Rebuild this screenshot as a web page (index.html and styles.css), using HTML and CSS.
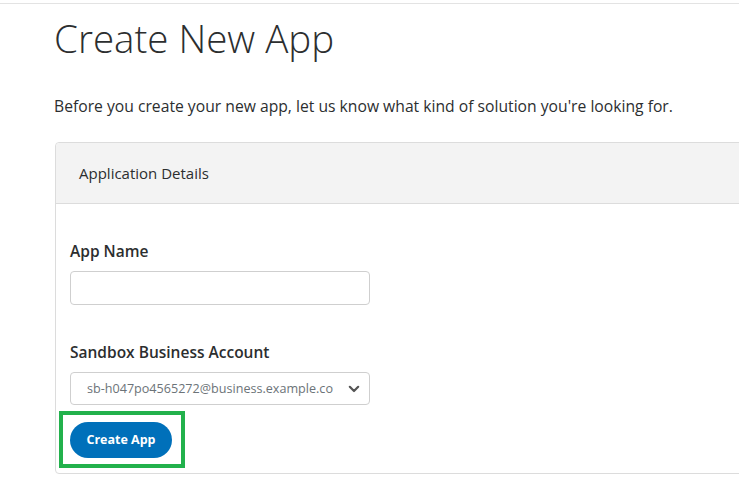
FILE: index.html
```html
<!DOCTYPE html>
<html lang="en">
<head>
<meta charset="utf-8">
<title>Create New App</title>
<link rel="stylesheet" href="styles.css">
</head>
<body>
<div class="topbar"></div>
<main class="page">
  <h1 class="title">Create New App</h1>
  <p class="intro">Before you create your new app, let us know what kind of solution you're looking for.</p>
  <section class="card">
    <div class="card-head">Application Details</div>
    <div class="card-body">
      <div class="field">
        <label class="label" for="appname">App Name</label>
        <input class="input" id="appname" type="text">
      </div>
      <div class="field field-select">
        <label class="label" for="acct">Sandbox Business Account</label>
        <div class="select">
          <span class="select-text">sb-h047po4565272@business.example.co</span>
          <svg class="chev" width="12" height="8" viewBox="0 0 12 8"><path d="M1.8 1.8 L6 6 L10.2 1.8" fill="none" stroke="#555" stroke-width="2.2" stroke-linecap="round" stroke-linejoin="round"/></svg>
        </div>
      </div>
      <div class="highlight">
        <button class="btn" type="button">Create App</button>
      </div>
    </div>
  </section>
</main>
</body>
</html>
```
FILE: styles.css
```css
* { box-sizing: border-box; }
html, body { margin: 0; padding: 0; background: #fff; }
body {
  font-family: "Open Sans", "Noto Sans", sans-serif;
  color: #2c2e2f;
  width: 739px;
  height: 494px;
  overflow: hidden;
}
.topbar {
  height: 4px;
  border-bottom: 1px solid #e3e3e3;
}
.page {
  padding-left: 54px;
}
.title {
  margin: 10px 0 0 0;
  font-size: 38.5px;
  font-weight: 300;
  line-height: 48px;
  color: #2c2e2f;
  letter-spacing: 0;
}
.intro {
  margin: 32px 0 0 0;
  font-size: 15.7px;
  font-weight: 400;
  line-height: 24px;
  color: #2c2e2f;
  white-space: nowrap;
}
.card {
  margin-top: 24px;
  margin-left: 1px;
  width: 720px;
  border: 1px solid #dcdcdc;
  border-radius: 4px;
  background: #fff;
}
.card-head {
  height: 61px;
  display: flex;
  align-items: center;
  padding-left: 23px;
  background: #f3f3f3;
  border-bottom: 1px solid #dcdcdc;
  border-radius: 4px 4px 0 0;
  font-size: 15px;
  color: #2c2e2f;
}
.card-body {
  padding: 37px 0 5px 3px;
}
.field {
  display: flex;
  flex-direction: column;
  padding-left: 11px;
}
.field-select { margin-top: 37px; }
.label {
  font-size: 15.5px;
  font-weight: 600;
  line-height: 20px;
  color: #2c2e2f;
  margin-bottom: 10px;
}
.input {
  width: 300px;
  height: 34px;
  border: 1px solid #cfcfcf;
  border-radius: 4px;
  background: #fff;
  font: inherit;
}
.select {
  width: 300px;
  height: 33px;
  border: 1px solid #cfcfcf;
  border-radius: 4px;
  background: #fff;
  display: flex;
  align-items: center;
  justify-content: space-between;
  padding: 0 9px 0 16px;
}
.select-text {
  font-size: 12.6px;
  color: #6c7378;
  white-space: nowrap;
}
.chev { flex: none; }
.highlight {
  margin-top: 6px;
  width: 126px;
  height: 57px;
  border: 4px solid #22b14c;
  display: flex;
  align-items: center;
  padding-left: 7px;
}
.btn {
  width: 102px;
  height: 36px;
  border: none;
  border-radius: 18px;
  background: #0070ba;
  color: #fff;
  font-family: "Open Sans", sans-serif;
  font-weight: 700;
  font-size: 12.5px;
  padding: 0;
  cursor: pointer;
}
```
